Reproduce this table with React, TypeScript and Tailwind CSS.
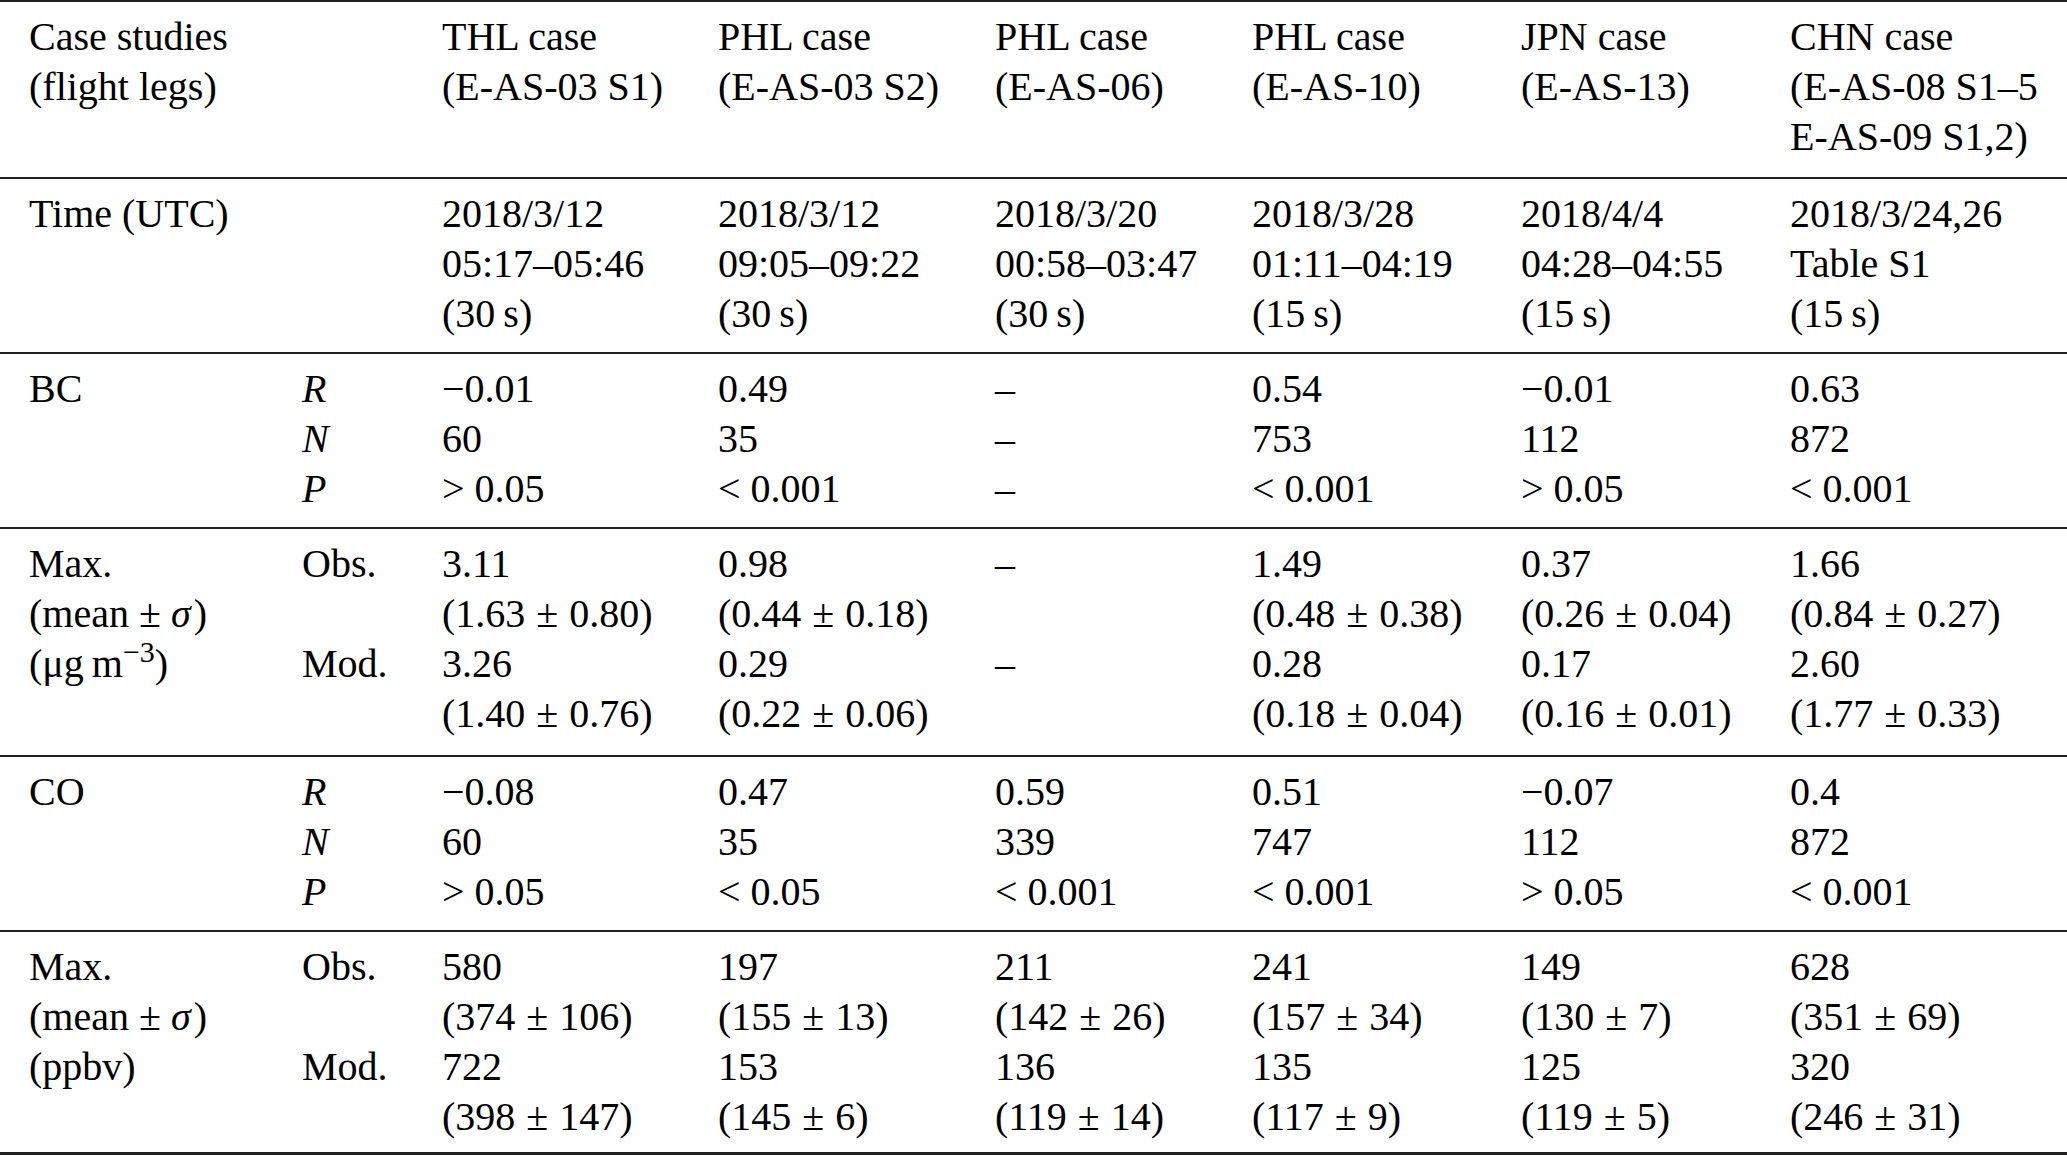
import type { ReactNode } from "react";

const cols = "grid grid-cols-[273px_140px_276px_277px_257px_269px_269px_1fr]";

const PM = ({ a, b }: { a: string; b: string }) => (
  <>
    ({a}
    <span className="mx-[11px]">±</span>
    {b})
  </>
);

const I = ({ children }: { children: ReactNode }) => <i className="italic">{children}</i>;

type Row = { label: ReactNode[]; sub: ReactNode[]; cells: ReactNode[][]; pad: string };

const meanSigma = (
  <>
    (mean ± <I>σ</I>
    <span className="ml-[3px]">)</span>
  </>
);

const rows: Row[] = [
  {
    label: ["Case studies", "(flight legs)"],
    sub: [],
    pad: "pt-[10px] pb-[15px]",
    cells: [
      ["THL case", "(E-AS-03 S1)"],
      ["PHL case", "(E-AS-03 S2)"],
      ["PHL case", "(E-AS-06)"],
      ["PHL case", "(E-AS-10)"],
      ["JPN case", "(E-AS-13)"],
      ["CHN case", "(E-AS-08 S1–5", "E-AS-09 S1,2)"],
    ],
  },
  {
    label: ["Time (UTC)"],
    sub: [],
    pad: "pt-[10px] pb-[13px]",
    cells: [
      ["2018/3/12", "05:17–05:46", "(30\u2009s)"],
      ["2018/3/12", "09:05–09:22", "(30\u2009s)"],
      ["2018/3/20", "00:58–03:47", "(30\u2009s)"],
      ["2018/3/28", "01:11–04:19", "(15\u2009s)"],
      ["2018/4/4", "04:28–04:55", "(15\u2009s)"],
      ["2018/3/24,26", "Table S1", "(15\u2009s)"],
    ],
  },
  {
    label: ["BC"],
    sub: [<I>R</I>, <I>N</I>, <I>P</I>],
    pad: "pt-[10px] pb-[13px]",
    cells: [
      ["−0.01", "60", "> 0.05"],
      ["0.49", "35", "< 0.001"],
      ["–", "–", "–"],
      ["0.54", "753", "< 0.001"],
      ["−0.01", "112", "> 0.05"],
      ["0.63", "872", "< 0.001"],
    ],
  },
  {
    label: [
      "Max.",
      meanSigma,
      <>
        (μg{"\u2009"}m<sup className="text-[30px]">−3</sup>)
      </>,
    ],
    sub: ["Obs.", "", "Mod."],
    pad: "pt-[10px] pb-[16px]",
    cells: [
      ["3.11", <PM a="1.63" b="0.80" />, "3.26", <PM a="1.40" b="0.76" />],
      ["0.98", <PM a="0.44" b="0.18" />, "0.29", <PM a="0.22" b="0.06" />],
      ["–", "", "–", ""],
      ["1.49", <PM a="0.48" b="0.38" />, "0.28", <PM a="0.18" b="0.04" />],
      ["0.37", <PM a="0.26" b="0.04" />, "0.17", <PM a="0.16" b="0.01" />],
      ["1.66", <PM a="0.84" b="0.27" />, "2.60", <PM a="1.77" b="0.33" />],
    ],
  },
  {
    label: ["CO"],
    sub: [<I>R</I>, <I>N</I>, <I>P</I>],
    pad: "pt-[10px] pb-[13px]",
    cells: [
      ["−0.08", "60", "> 0.05"],
      ["0.47", "35", "< 0.05"],
      ["0.59", "339", "< 0.001"],
      ["0.51", "747", "< 0.001"],
      ["−0.07", "112", "> 0.05"],
      ["0.4", "872", "< 0.001"],
    ],
  },
  {
    label: ["Max.", meanSigma, "(ppbv)"],
    sub: ["Obs.", "", "Mod."],
    pad: "pt-[10px] pb-[10px]",
    cells: [
      ["580", <PM a="374" b="106" />, "722", <PM a="398" b="147" />],
      ["197", <PM a="155" b="13" />, "153", <PM a="145" b="6" />],
      ["211", <PM a="142" b="26" />, "136", <PM a="119" b="14" />],
      ["241", <PM a="157" b="34" />, "135", <PM a="117" b="9" />],
      ["149", <PM a="130" b="7" />, "125", <PM a="119" b="5" />],
      ["628", <PM a="351" b="69" />, "320", <PM a="246" b="31" />],
    ],
  },
];

const Cell = ({ lines }: { lines: ReactNode[] }) => (
  <div className="flex flex-col">
    {lines.map((l, i) => (
      <div key={i} className="h-[50px] whitespace-nowrap">
        {l}
      </div>
    ))}
  </div>
);

export default function App() {
  return (
    <div className="min-h-screen w-full bg-white text-black font-['Liberation_Serif','Times_New_Roman',serif] text-[40px] leading-[50px]">
      {rows.map((r, i) => (
        <div
          key={i}
          className={`border-t-2 border-[#231f20] pl-[29px] ${r.pad} ${i === rows.length - 1 ? "border-b-[3px]" : ""}`}
        >
          <div className={cols}>
            <Cell lines={r.label} />
            <Cell lines={r.sub} />
            {r.cells.map((c, j) => (
              <Cell key={j} lines={c} />
            ))}
            <div />
          </div>
        </div>
      ))}
    </div>
  );
}
